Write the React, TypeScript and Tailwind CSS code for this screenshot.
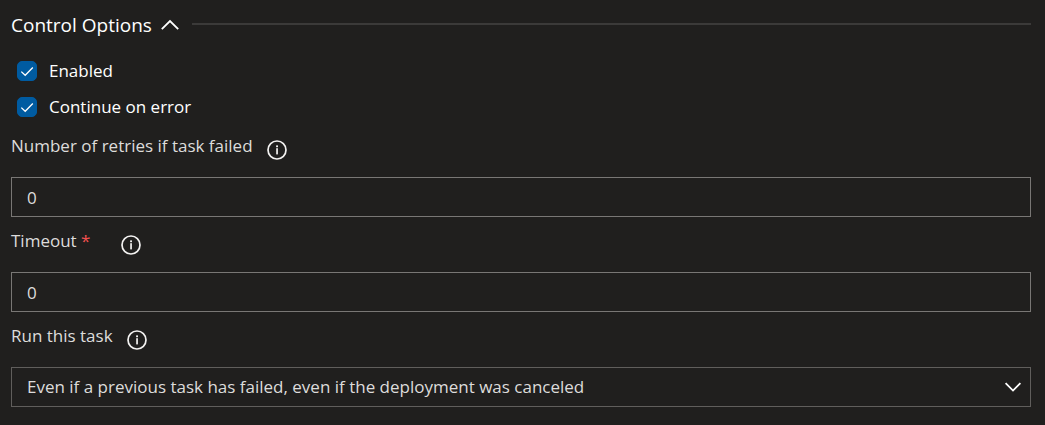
import { useState } from "react";
import type { ReactNode } from "react";

function InfoButton({ label }: { label: string }) {
  return (
    <button type="button" aria-label={label} className="mt-1.5 size-5 shrink-0 text-[#f3f2f1]">
      <svg viewBox="0 0 20 20" className="size-5" fill="none" aria-hidden="true">
        <circle cx="10" cy="10" r="9" stroke="currentColor" strokeWidth="1.7" />
        <rect x="9.2" y="8.2" width="1.7" height="6.2" fill="currentColor" />
        <rect x="9.1" y="5.4" width="1.9" height="1.8" fill="currentColor" />
      </svg>
    </button>
  );
}

function Check({ id, label }: { id: string; label: string }) {
  return (
    <div className="flex h-9 items-center gap-3 pl-1.5">
      <span className="grid size-5 shrink-0">
        <input
          id={id}
          type="checkbox"
          defaultChecked
          className="peer col-start-1 row-start-1 size-5 appearance-none rounded-[5px] border border-[#8a8886] checked:border-[#005ba1] checked:bg-[#005ba1]"
        />
        <svg
          viewBox="0 0 20 20"
          className="pointer-events-none invisible col-start-1 row-start-1 size-5 peer-checked:visible"
          fill="none"
          stroke="#ffffff"
          strokeWidth="1.3"
          aria-hidden="true"
        >
          <path d="M4.3 10.6 8.2 14.3 15.8 6.5" />
        </svg>
      </span>
      <label htmlFor={id} className="text-[17px] leading-6 text-white">
        {label}
      </label>
    </div>
  );
}

function Field({
  id,
  label,
  info,
  required,
  children,
}: {
  id: string;
  label: string;
  info: string;
  required?: boolean;
  children: ReactNode;
}) {
  return (
    <div className="flex flex-col">
      <div className={required ? "flex h-[43px] items-start gap-[31px]" : "flex h-[43px] items-start gap-3.5"}>
        <label htmlFor={id} className="text-[17px] leading-6 text-[#dddcdb]">
          {label}
          {required && <span className="text-[#f1504f]"> *</span>}
        </label>
        <InfoButton label={info} />
      </div>
      {children}
    </div>
  );
}

export default function App() {
  const [open, setOpen] = useState(true);
  return (
    <main className="min-h-screen bg-[#201f1e] pt-[9px] pr-3.5 pb-4 pl-[11px] font-['Open_Sans','Noto_Sans',sans-serif]">
      <div className="flex items-center gap-3">
        <h2 className="pt-0.5 text-[19px] leading-7 text-white">
          <button
            type="button"
            aria-expanded={open}
            onClick={() => setOpen(!open)}
            className="flex items-center gap-2"
          >
            Control Options
            <svg
              viewBox="0 0 20 20"
              className={open ? "size-5" : "size-5 rotate-180"}
              fill="none"
              stroke="currentColor"
              strokeWidth="1.8"
              aria-hidden="true"
            >
              <path d="M1.8 14.2 10 6 18.2 14.2" />
            </svg>
          </button>
        </h2>
        <div className="h-0.5 flex-1 bg-[#3b3a39]" />
      </div>
      {open && (
        <div className="pt-3.5">
          <Check id="enabled" label="Enabled" />
          <Check id="continue" label="Continue on error" />
          <div className="flex flex-col gap-3 pt-[9px]">
            <Field id="retries" label="Number of retries if task failed" info="About retries">
              <input
                id="retries"
                type="text"
                defaultValue="0"
                className="h-10 w-full border border-[#797775] bg-transparent px-[15px] text-[17px] text-[#dddcdb]"
              />
            </Field>
            <Field id="timeout" label="Timeout" info="About timeout" required>
              <input
                id="timeout"
                type="text"
                required
                defaultValue="0"
                className="h-10 w-full border border-[#797775] bg-transparent px-[15px] text-[17px] text-[#dddcdb]"
              />
            </Field>
            <Field id="run" label="Run this task" info="About run condition">
              <div className="grid items-center">
                <select
                  id="run"
                  className="col-start-1 row-start-1 h-10 w-full appearance-none border border-[#605e5c] bg-[#201f1e] pr-10 pl-[15px] text-[17px] text-[#dddcdb]"
                >
                  <option>Even if a previous task has failed, even if the deployment was canceled</option>
                </select>
                <svg
                  viewBox="0 0 18 18"
                  className="pointer-events-none col-start-1 row-start-1 mr-[9px] size-[18px] justify-self-end"
                  fill="none"
                  stroke="#ffffff"
                  strokeWidth="1.8"
                  aria-hidden="true"
                >
                  <path d="M1.6 5.2 9 12.6 16.4 5.2" />
                </svg>
              </div>
            </Field>
          </div>
        </div>
      )}
    </main>
  );
}
